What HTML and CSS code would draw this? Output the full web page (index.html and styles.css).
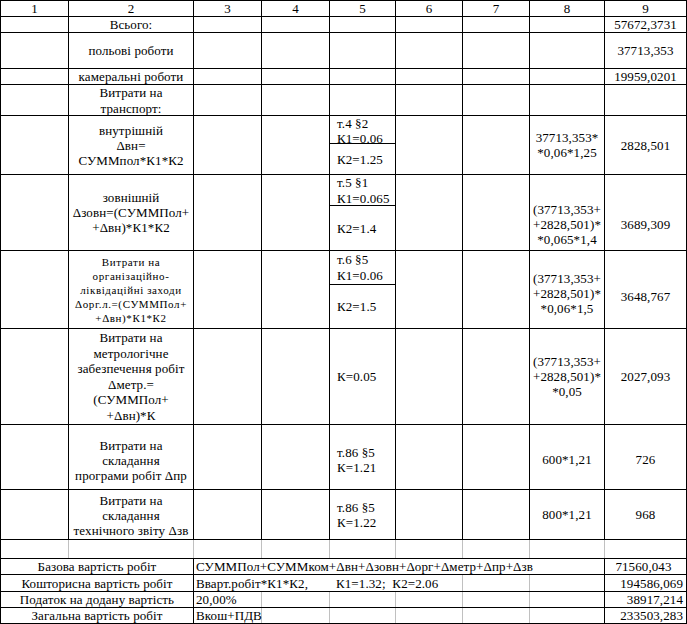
FILE: index.html
```html
<!DOCTYPE html>
<html lang="uk">
<head>
<meta charset="utf-8">
<title>Кошторис</title>
<link rel="stylesheet" href="styles.css">
</head>
<body>
<table class="sheet">
  <colgroup>
    <col class="w1"><col class="w2"><col class="w3"><col class="w4"><col class="w5"><col class="w6"><col class="w7"><col class="w8"><col class="w9">
  </colgroup>
  <tr class="r0">
    <td>1</td><td>2</td><td>3</td><td>4</td><td>5</td><td>6</td><td>7</td><td>8</td><td>9</td>
  </tr>
  <tr class="r1">
    <td></td><td>Всього:</td><td></td><td></td><td></td><td></td><td></td><td></td><td>57672,3731</td>
  </tr>
  <tr class="r2">
    <td></td><td>польові роботи</td><td></td><td></td><td></td><td></td><td></td><td></td><td>37713,353</td>
  </tr>
  <tr class="r3">
    <td></td><td>камеральні роботи</td><td></td><td></td><td></td><td></td><td></td><td></td><td>19959,0201</td>
  </tr>
  <tr class="r4">
    <td></td><td class="top"><div class="clip">Витрати на<br>транспорт:</div></td><td></td><td></td><td></td><td></td><td></td><td></td><td></td>
  </tr>
  <tr class="r5">
    <td></td>
    <td>внутрішній<br>Δвн=<br>СУММпол*К1*К2</td>
    <td></td><td></td>
    <td class="split"><div class="sub-top st5">т.4 §2<br>К1=0.06</div><div class="sub-bot sb5">К2=1.25</div></td>
    <td></td><td></td>
    <td>37713,353*<br>*0,06*1,25</td>
    <td>2828,501</td>
  </tr>
  <tr class="r6">
    <td></td>
    <td>зовнішній<br>Δзовн=(СУММПол+<br>+Δвн)*К1*К2</td>
    <td></td><td></td>
    <td class="split"><div class="sub-top st6">т.5 §1<br>К1=0.065</div><div class="sub-bot sb6">К2=1.4</div></td>
    <td></td><td></td>
    <td class="down23">(37713,353+<br>+2828,501)*<br>*0,065*1,4</td>
    <td class="down23">3689,309</td>
  </tr>
  <tr class="r7">
    <td></td>
    <td class="small">Витрати на<br>організаційно-<br>ліквідаційні заходи<br>Δорг.л.=(СУММПол+<br>+Δвн)*К1*К2</td>
    <td></td><td></td>
    <td class="split"><div class="sub-top st7">т.6 §5<br>К1=0.06</div><div class="sub-bot sb7">К2=1.5</div></td>
    <td></td><td></td>
    <td class="down8">(37713,353+<br>+2828,501)*<br>*0,06*1,5</td>
    <td class="down14">3648,767</td>
  </tr>
  <tr class="r8">
    <td></td>
    <td class="tall">Витрати на<br>метрологічне<br>забезпечення робіт<br>Δметр.=<br>(СУММПол+<br>+Δвн)*К</td>
    <td></td><td></td>
    <td class="left5">К=0.05</td>
    <td></td><td></td>
    <td>(37713,353+<br>+2828,501)*<br>*0,05</td>
    <td>2027,093</td>
  </tr>
  <tr class="r9">
    <td></td>
    <td class="down6">Витрати на<br>складання<br>програми робіт Δпр</td>
    <td></td><td></td>
    <td class="left5 down6">т.86 §5<br>К=1.21</td>
    <td></td><td></td>
    <td class="down4">600*1,21</td>
    <td class="down4">726</td>
  </tr>
  <tr class="r10">
    <td></td>
    <td class="top pad4">Витрати на<br>складання<br>технічного звіту Δзв</td>
    <td></td><td></td>
    <td class="left5">т.86 §5<br>К=1.22</td>
    <td></td><td></td>
    <td>800*1,21</td>
    <td>968</td>
  </tr>
  <tr class="r11">
    <td class="gr"></td><td class="gl gr"></td><td class="gl gr"></td><td class="gl gr"></td><td class="gl gr"></td><td class="gl gr"></td><td class="gl gr"></td><td class="gl gr"></td><td class="gl"></td>
  </tr>
  <tr class="rb">
    <td colspan="2">Базова вартість робіт</td>
    <td colspan="6" class="left">СУММПол+СУММком+Δвн+Δзовн+Δорг+Δметр+Δпр+Δзв</td>
    <td class="mid9">71560,043</td>
  </tr>
  <tr class="rb rb2">
    <td colspan="2">Кошторисна вартість робіт</td>
    <td colspan="4" class="left gr">Вварт.робіт*К1*К2,<span class="gap">К1=1.32;&nbsp; К2=2.06</span></td>
    <td class="gl gr"></td><td class="gl"></td>
    <td class="right">194586,069</td>
  </tr>
  <tr class="rb">
    <td colspan="2">Податок на додану вартість</td>
    <td class="left gr">20,00%</td>
    <td class="gl gr"></td><td class="gl gr"></td><td class="gl gr"></td><td class="gl gr"></td><td class="gl"></td>
    <td class="right">38917,214</td>
  </tr>
  <tr class="rb">
    <td colspan="2">Загальна вартість робіт</td>
    <td class="left gr">Вкош+ПДВ</td>
    <td class="gl gr"></td><td class="gl gr"></td><td class="gl gr"></td><td class="gl gr"></td><td class="gl"></td>
    <td class="right">233503,283</td>
  </tr>
</table>
</body>
</html>
```

FILE: styles.css
```css
html, body {
  margin: 0;
  padding: 0;
  background: #ffffff;
}

.sheet {
  border-collapse: collapse;
  table-layout: fixed;
  width: 687px;
  font-family: "Liberation Serif", "Tinos", "Times New Roman", serif;
  font-size: 13px;
  letter-spacing: 0.1px;
  color: #000;
}

.w1 { width: 68px; }
.w2 { width: 125px; }
.w3 { width: 68px; }
.w4 { width: 68px; }
.w5 { width: 66px; }
.w6 { width: 67px; }
.w7 { width: 67px; }
.w8 { width: 75px; }
.w9 { width: 82px; }

.sheet td {
  border: 1px solid #000;
  padding: 0;
  text-align: center;
  vertical-align: middle;
  line-height: 15px;
  white-space: nowrap;
  overflow: hidden;
}

.r0 { height: 16px; }
.r1 { height: 16px; }
.r2 { height: 36px; }
.r3 { height: 15px; }
.r4 { height: 31px; }
.r5 { height: 59px; }
.r6 { height: 76px; }
.r7 { height: 78px; }
.r8 { height: 96px; }
.r9 { height: 65px; }
.r10 { height: 50px; }
.r11 { height: 19px; }
.rb { height: 16px; }
.rb2 { height: 17px; }

.sheet td.top { vertical-align: top; }
.sheet td.pad4 { padding-top: 3px; }

.clip {
  height: 30px;
  overflow: hidden;
  line-height: 16px;
}

.sheet td.split {
  vertical-align: top;
  text-align: left;
}

.sub-top {
  border-bottom: 1px solid #000;
  padding-left: 7px;
  line-height: 16px;
  box-sizing: border-box;
}

.sub-bot {
  display: flex;
  align-items: center;
  padding-left: 7px;
}

.st5 { height: 28px; padding-top: 0; line-height: 15px; }
.sb5 { height: 30px; }
.st6 { height: 31px; }
.sb6 { height: 44px; }
.st7 { height: 34px; padding-top: 1px; }
.sb7 { height: 43px; }

.sheet td.left5 {
  text-align: left;
  padding-left: 7px;
}

.sheet td.small {
  font-size: 11px;
  letter-spacing: 0.6px;
  line-height: 14px;
}

.sheet td.tall { line-height: 15.5px; }

.sheet td.down4 { padding-top: 4px; }
.sheet td.down6 { padding-top: 6px; }
.sheet td.down8 { padding-top: 8px; }
.sheet td.down14 { padding-top: 14px; }
.sheet td.down23 { padding-top: 23px; }

.sheet td.left {
  text-align: left;
  padding-left: 2px;
  overflow: visible;
}

.sheet td.right {
  text-align: right;
  padding-right: 3px;
}

.sheet td.mid9 {
  padding-right: 4px;
}

.gap { margin-left: 28px; }

.sheet td.gl { border-left-color: #c0c0c0; }
.sheet td.gr { border-right-color: #c0c0c0; }
```
